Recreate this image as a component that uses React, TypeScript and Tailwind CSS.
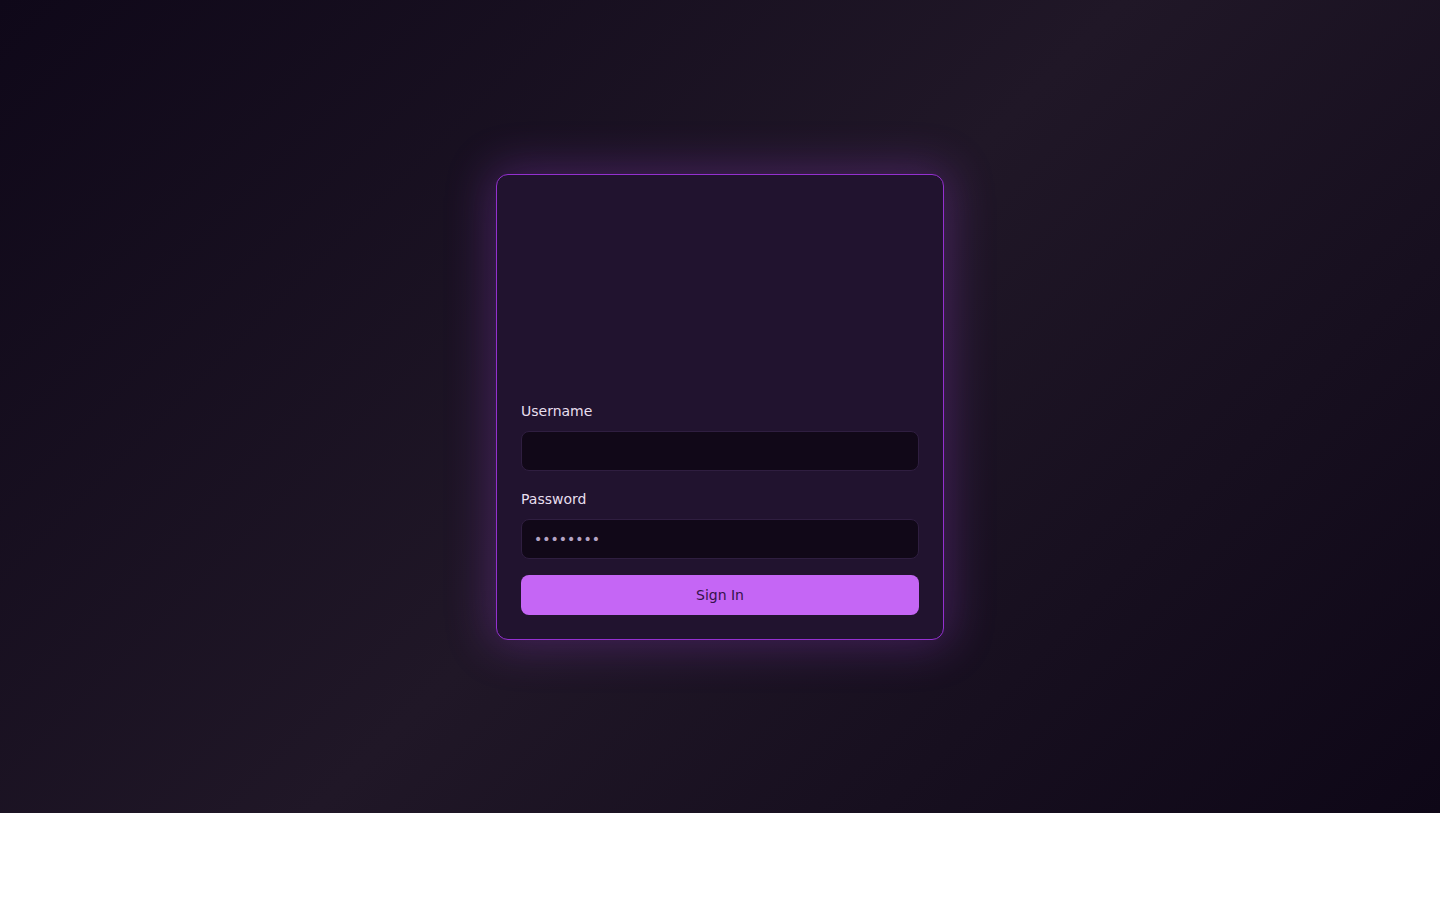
import { useState, type FormEvent } from 'react';

/** Login card centred on a dark violet diagonal gradient. */
export default function App() {
  const [username, setUsername] = useState('');
  const [password, setPassword] = useState('12345678');

  const handleSubmit = (e: FormEvent) => {
    e.preventDefault();
  };

  return (
    <div className="flex h-[813px] w-full items-center justify-center bg-[linear-gradient(135deg,#0f0819_0%,#201727_50%,#0e0717_100%)] font-['DejaVu_Sans',sans-serif]">
      <form
        onSubmit={handleSubmit}
        className="w-[448px] rounded-xl border border-[#9430d0] bg-[#21132f] p-6 shadow-[0_0_45px_6px_rgba(170,70,230,0.28)]"
      >
        {/* logo slot (empty in the shot) */}
        <div className="h-[202px]" />

        <label htmlFor="username" className="mb-[10px] block h-5 text-sm leading-5 text-[#e8dfee]">
          Username
        </label>
        <input
          id="username"
          className="block h-10 w-full rounded-lg border border-[#2f1e40] bg-[#110818] px-3 text-sm text-[#e8dfee] outline-none"
          value={username}
          onChange={(e) => setUsername(e.target.value)}
        />

        <label htmlFor="password" className="mt-[18px] mb-[10px] block h-5 text-sm leading-5 text-[#e8dfee]">
          Password
        </label>
        <input
          id="password"
          type="password"
          className="block h-10 w-full rounded-lg border border-[#2f1e40] bg-[#110818] px-3 text-sm text-[#b4a3c4] outline-none"
          value={password}
          onChange={(e) => setPassword(e.target.value)}
        />

        <button
          type="submit"
          className="mt-4 block h-10 w-full rounded-lg bg-[#c566f5] text-sm text-[#35124a]"
        >
          Sign In
        </button>
      </form>
    </div>
  );
}
